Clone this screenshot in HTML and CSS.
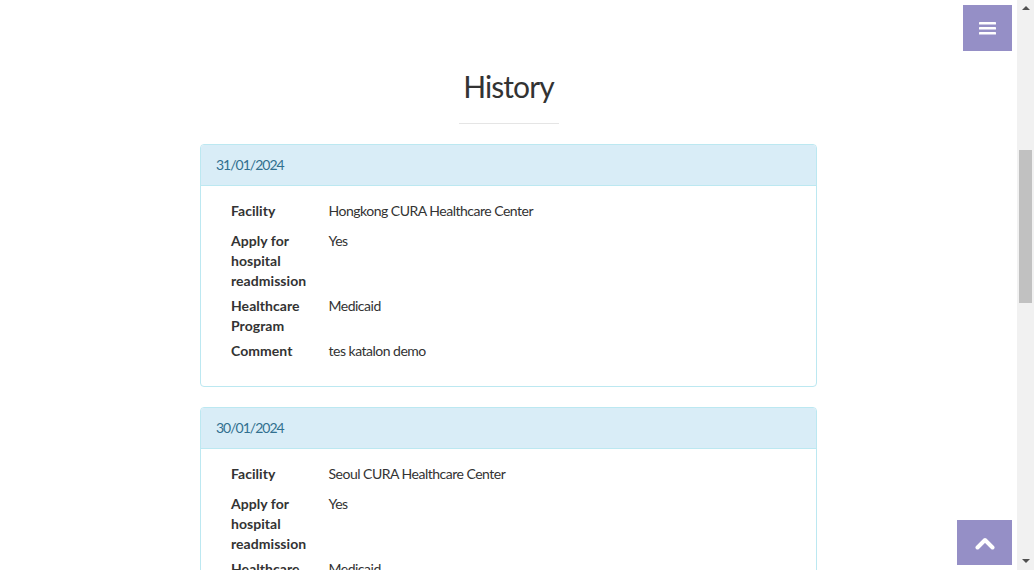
FILE: index.html
```html
<!DOCTYPE html>
<html lang="en">
<head>
<meta charset="utf-8">
<title>CURA Healthcare Service - History</title>
<link rel="stylesheet" href="styles.css">
</head>
<body>
<div class="page">
  <section class="history">
    <div class="container">
      <h2 class="title">History</h2>
      <hr class="small">

      <div class="panel">
        <div class="panel-heading">31/01/2024</div>
        <div class="panel-body">
          <div class="col-label"><label>Facility</label></div>
          <div class="col-value"><p>Hongkong CURA Healthcare Center</p></div>
          <div class="col-label"><label>Apply for hospital readmission</label></div>
          <div class="col-value"><p>Yes</p></div>
          <div class="col-label"><label>Healthcare Program</label></div>
          <div class="col-value"><p>Medicaid</p></div>
          <div class="col-label"><label>Comment</label></div>
          <div class="col-value"><p>tes katalon demo</p></div>
        </div>
      </div>

      <div class="panel">
        <div class="panel-heading">30/01/2024</div>
        <div class="panel-body">
          <div class="col-label"><label>Facility</label></div>
          <div class="col-value"><p>Seoul CURA Healthcare Center</p></div>
          <div class="col-label"><label>Apply for hospital readmission</label></div>
          <div class="col-value"><p>Yes</p></div>
          <div class="col-label"><label>Healthcare Program</label></div>
          <div class="col-value"><p>Medicaid</p></div>
          <div class="col-label"><label>Comment</label></div>
          <div class="col-value"><p>tes katalon demo</p></div>
        </div>
      </div>
    </div>
  </section>
</div>

<a class="menu-toggle" href="#">
  <svg width="17" height="14" viewBox="0 0 17 14" aria-hidden="true">
    <rect x="0" y="1" width="17" height="2.6" rx="0.6" fill="#fff"/>
    <rect x="0" y="6" width="17" height="2.6" rx="0.6" fill="#fff"/>
    <rect x="0" y="11" width="17" height="2.6" rx="0.6" fill="#fff"/>
  </svg>
</a>

<a class="to-top" href="#">
  <svg width="20" height="14" viewBox="0 0 20 14" aria-hidden="true">
    <polyline points="2.5,11.5 10,4 17.5,11.5" fill="none" stroke="#fff" stroke-width="4" stroke-linecap="round" stroke-linejoin="round"/>
  </svg>
</a>

<div class="scrollbar">
  <span class="arrow arrow-up"></span>
  <div class="track"><div class="thumb"></div></div>
  <span class="arrow arrow-down"></span>
</div>
</body>
</html>
```

FILE: styles.css
```css
html, body {
  margin: 0;
  padding: 0;
  height: 100%;
  overflow: hidden;
  background: #fff;
}

body {
  font-family: "Source Sans Pro", Lato, "Liberation Sans", sans-serif;
  font-size: 14px;
  line-height: 20px;
  letter-spacing: -0.5px;
  color: #333;
}

.page {
  width: 1017px;
}

.history {
  padding-top: 70px;
}

.container {
  width: 617px;
  margin: 0 auto;
}

.title {
  margin: 0 0 20px;
  font-size: 30px;
  line-height: 33px;
  font-weight: 400;
  letter-spacing: -0.9px;
  text-align: center;
  color: #333;
}

hr.small {
  width: 100px;
  margin: 0 auto 20px;
  border: 0;
  border-top: 1px solid #e5e5e5;
  height: 0;
}

.panel {
  border: 1px solid #bce8f1;
  border-radius: 4px;
  margin-bottom: 20px;
  background: #fff;
}

.panel-heading {
  padding: 10px 15px;
  background: #d9edf7;
  color: #31708f;
  letter-spacing: -1px;
  border-bottom: 1px solid #bce8f1;
  border-radius: 3px 3px 0 0;
}

.panel-body {
  padding: 15px;
  display: grid;
  grid-template-columns: 16.6667% 75%;
}

.col-label, .col-value {
  padding: 0 15px;
  min-width: 0;
}

.col-label label {
  display: block;
  margin-bottom: 5px;
  font-weight: 700;
  letter-spacing: 0.05px;
}

.col-value p {
  margin: 0 0 10px;
}

.menu-toggle,
.to-top {
  position: fixed;
  right: 22px;
  background: #958fc6;
  display: flex;
  align-items: center;
  justify-content: center;
}

.menu-toggle {
  top: 5px;
  width: 49px;
  height: 46px;
}

.to-top {
  bottom: 5px;
  width: 55px;
  height: 45px;
}

.scrollbar {
  position: fixed;
  top: 0;
  right: 0;
  width: 17px;
  height: 570px;
  background: #f1f1f1;
  display: flex;
  flex-direction: column;
  align-items: center;
}

.arrow {
  width: 0;
  height: 0;
  border-left: 4px solid transparent;
  border-right: 4px solid transparent;
  flex: none;
}

.arrow-up {
  margin-top: 6px;
  border-bottom: 4px solid #505050;
}

.arrow-down {
  margin-bottom: 7px;
  border-top: 4px solid #505050;
}

.track {
  flex: 1;
  width: 100%;
  display: flex;
  justify-content: center;
}

.thumb {
  width: 13px;
  height: 153px;
  margin-top: 140px;
  background: #c1c1c1;
}
```
